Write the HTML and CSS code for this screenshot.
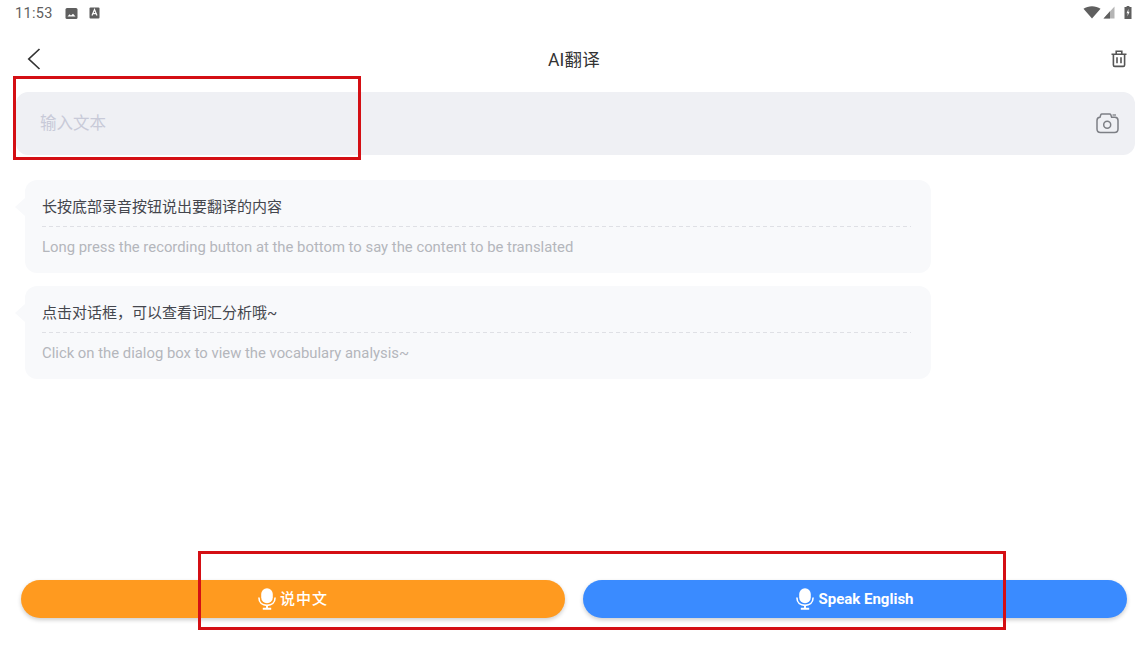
FILE: index.html
```html
<!DOCTYPE html>
<html>
<head>
	<title>AI翻译</title>
<link rel="stylesheet" href="styles.css">
</head>
<body>
	<div class="page">
		<div class="status">
			<div class="status-left">
				<span class="time">11:53</span>
				<svg class="note-pic" width="13" height="13" viewBox="0 0 13 13"><rect x="0.5" y="1" width="12" height="11" rx="1.5" fill="#5f5f5f"/><path d="M2.5 9.5 L4.6 7.2 L6 8.6 L8 6.8 L10.5 9.5 Z" fill="#fff"/></svg>
				<svg class="note-a" width="11" height="12" viewBox="0 0 11 12"><rect x="0.5" y="0.5" width="10" height="11" rx="1" fill="#5f5f5f"/><path d="M3 8.6 L5.5 2.6 L8 8.6 M4 6.6 H7" fill="none" stroke="#fff" stroke-width="1.2"/></svg>
			</div>
			<div class="status-right">
				<svg class="wifi" width="18" height="13" viewBox="0 0 18 13"><path d="M0.5 2.8 C5 -0.6 13 -0.6 17.5 2.8 L9 12.5 Z" fill="#5f5f5f"/></svg>
				<svg class="signal" width="12" height="13" viewBox="0 0 12 13"><path d="M11.5 0.5 V12.5 H0.5 Z" fill="#b5b5b5"/><path d="M7 5.2 V12.5 H0.5 Z" fill="#5f5f5f"/></svg>
				<svg class="battery" width="8" height="13" viewBox="0 0 8 13"><path d="M2.6 0 H5.4 V1 H7.5 V13 H0.5 V1 H2.6 Z" fill="#5f5f5f"/><path d="M4.6 2.8 L2.5 7.2 H3.9 L3.3 10.4 L5.6 5.8 H4.2 Z" fill="#fff"/></svg>
			</div>
		</div>

		<div class="header">
			<svg class="back" width="14" height="22" viewBox="0 0 14 22"><path d="M12.5 1 L1.8 11 L12.5 21" fill="none" stroke="#333" stroke-width="1.7"/></svg>
			<div class="title">AI翻译</div>
			<svg class="trash" width="16" height="18" viewBox="0 0 16 18"><path d="M0.5 4.2 H15.5 M5.2 4 V1.3 H10.8 V4 M2.4 4.2 V15 Q2.4 16.4 3.8 16.4 H12.2 Q13.6 16.4 13.6 15 V4.2 M6 7.2 V13.2 M10 7.2 V13.2" fill="none" stroke="#555" stroke-width="1.6"/></svg>
		</div>

		<div class="input-bar">
			<span class="placeholder">输入文本</span>
			<svg class="camera" width="24" height="22" viewBox="0 0 24 22"><path d="M2 8.5 C2 6.5 3.5 5.2 5 5.2 L5.8 2.8 C6 2.2 6.5 2 7 2 H14.5 C15.2 2 15.6 2.3 15.8 2.8 L16.6 5.2 H20 C21.8 5.2 23 6.5 23 8.5 V17 C23 19.2 21.6 20.5 19.5 20.5 H5.5 C3.4 20.5 2 19.2 2 17 Z" fill="none" stroke="#7d7f85" stroke-width="1.5"/><circle cx="12.2" cy="12.8" r="3.5" fill="none" stroke="#7d7f85" stroke-width="1.5"/><path d="M17.5 3 H21" stroke="#7d7f85" stroke-width="1.3"/></svg>
		</div>

		<div class="chat">
			<div class="bubble">
				<div class="zh">长按底部录音按钮说出要翻译的内容</div>
				<div class="en">Long press the recording button at the bottom to say the content to be translated</div>
			</div>
			<div class="bubble">
				<div class="zh">点击对话框，可以查看词汇分析哦~</div>
				<div class="en">Click on the dialog box to view the vocabulary analysis~</div>
			</div>
		</div>

		<div class="actions">
			<button class="speak orange">
				<svg width="18" height="22" viewBox="0 0 18 22"><rect x="3.2" y="0.3" width="11.6" height="15" rx="5.8" fill="#fff"/><path d="M0.9 9.6 C0.9 14.8 4.4 17.4 9 17.4 C13.6 17.4 17.1 14.8 17.1 9.6" fill="none" stroke="#fff" stroke-width="1.6"/><path d="M9 17 V20 M4.8 20.7 H13.2" stroke="#fff" stroke-width="1.9"/></svg>
				<span class="label-zh">说中文</span>
			</button>
			<button class="speak blue">
				<svg width="18" height="22" viewBox="0 0 18 22"><rect x="3.2" y="0.3" width="11.6" height="15" rx="5.8" fill="#fff"/><path d="M0.9 9.6 C0.9 14.8 4.4 17.4 9 17.4 C13.6 17.4 17.1 14.8 17.1 9.6" fill="none" stroke="#fff" stroke-width="1.6"/><path d="M9 17 V20 M4.8 20.7 H13.2" stroke="#fff" stroke-width="1.9"/></svg>
				<span>Speak English</span>
			</button>
		</div>
	</div>

	<div class="mark mark-input"></div>
	<div class="mark mark-buttons"></div>
</body>
</html>
```

FILE: styles.css
```css
body {
  margin: 0;
  background-color: #fff;
  font-family: Roboto, "Noto Sans CJK SC", sans-serif;
  overflow: hidden;
}

.page {
  display: flex;
  flex-direction: column;
  height: 645px;
}

.status {
  display: flex;
  justify-content: space-between;
  align-items: center;
  height: 26px;
  padding: 0 16px 0 15px;
}

.status-left,
.status-right {
  display: flex;
  align-items: center;
}

.status-right {
  margin-top: -2px;
}

.signal {
  margin-left: 2px;
}

.battery {
  margin-left: 9px;
}

.time {
  color: #5f5f5f;
  font-size: 14.5px;
  letter-spacing: 0.3px;
}

.note-pic {
  margin-left: 12px;
}

.note-a {
  margin-left: 11px;
}

.header {
  display: flex;
  justify-content: space-between;
  align-items: center;
  height: 66px;
  padding: 0 21px 0 27px;
  box-sizing: border-box;
  flex-shrink: 0;
}

.title {
  margin-right: 4px;
  padding-bottom: 2px;
  color: #333;
  font-size: 17.5px;
  letter-spacing: 0.2px;
}

.input-bar {
  display: flex;
  justify-content: space-between;
  align-items: center;
  height: 63px;
  margin: 0 13px 0 16px;
  padding: 0 16px 0 24px;
  background-color: #eff0f4;
  border-radius: 12px;
  box-sizing: border-box;
}

.placeholder {
  padding-bottom: 4px;
  color: #c8cad8;
  font-size: 16.5px;
}

.camera {
  margin-bottom: 2px;
}

.chat {
  display: flex;
  flex-direction: column;
  gap: 13px;
  margin: 25px 0 0 25px;
  flex: 1;
}

.bubble {
  position: relative;
  width: 906px;
  height: 93px;
  padding: 0 20px 0 17px;
  background-color: #f8f9fb;
  border-radius: 12px;
  box-sizing: border-box;
}

.bubble::before {
  content: "";
  position: absolute;
  left: -10px;
  top: 18px;
  border: 9px solid transparent;
  border-left: 0;
  border-right: 10px solid #f8f9fb;
}

.zh {
  height: 47px;
  line-height: 54px;
  color: #44464d;
  font-size: 15px;
  background: repeating-linear-gradient(90deg, #dfe0e5 0 4px, transparent 4px 7px) left bottom / 100% 1px no-repeat;
}

.en {
  line-height: 41px;
  color: #b4b6bc;
  font-size: 14.85px;
}

.actions {
  display: flex;
  gap: 18px;
  padding: 0 21px;
  margin-bottom: 27px;
}

.speak {
  display: flex;
  justify-content: center;
  align-items: center;
  gap: 4px;
  flex: 1;
  height: 38px;
  border: none;
  border-radius: 19px;
  color: #fff;
  font-family: inherit;
  font-size: 15px;
  font-weight: 700;
  box-shadow: 0 2px 4px rgba(0, 0, 0, 0.2);
}

.label-zh {
  padding-bottom: 4px;
  font-weight: 500;
  letter-spacing: 1px;
}

.orange {
  background-color: #ff9a1f;
}

.blue {
  background-color: #3a8bff;
}

.mark {
  position: absolute;
  border: 3px solid #d40f14;
  box-sizing: border-box;
}

.mark-input {
  left: 13px;
  top: 76px;
  width: 348px;
  height: 84px;
}

.mark-buttons {
  left: 198px;
  top: 551px;
  width: 808px;
  height: 79px;
}
```
